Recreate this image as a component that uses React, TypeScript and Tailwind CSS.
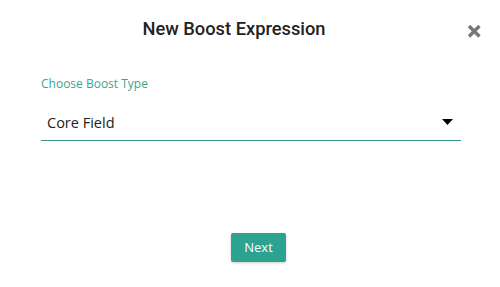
import React from "react";

export default function App() {
  return (
    <div className="w-[500px] h-[287px] bg-white relative overflow-hidden">
      <div className="flex items-start pt-[17px]">
        <h1
          className="flex-1 text-center text-[18.3px] leading-[24px] font-medium text-[#222]"
          style={{ fontFamily: "Roboto, sans-serif" }}
        >
          New Boost Expression
        </h1>
        <button className="w-[32px] flex pt-[8px]" aria-label="close">
          <svg width="13" height="13" viewBox="0 0 13 13">
            <path d="M1 1 L11.5 11.5 M11.5 1 L1 11.5" stroke="#777" strokeWidth="3.4" strokeLinecap="butt" />
          </svg>
        </button>
      </div>
      <div className="pl-[41px] pr-[39px] pt-[35px]" style={{ fontFamily: '"Open Sans", sans-serif' }}>
        <label className="block text-[12px] leading-[16px] text-[#3aa597]">Choose Boost Type</label>
        <div className="mt-[21px] flex items-center justify-between border-b border-[#3a9a8a] pl-[6px] pr-[8px] pb-[7px]">
          <span className="text-[14.5px] leading-[20px] text-[#222]">Core Field</span>
          <svg width="11" height="6" viewBox="0 0 11 6" className="mb-[3px]">
            <path d="M0 0 L11 0 L5.5 6 Z" fill="#000" />
          </svg>
        </div>
      </div>
      <div className="flex justify-center pt-[92px]">
        <button
          className="ml-[17px] w-[55px] h-[29px] rounded-[2px] bg-[#2ca291] text-white text-[13px] shadow-[0_1px_3px_rgba(0,0,0,0.2)]"
          style={{ fontFamily: '"Open Sans", sans-serif' }}
        >
          Next
        </button>
      </div>
    </div>
  );
}
